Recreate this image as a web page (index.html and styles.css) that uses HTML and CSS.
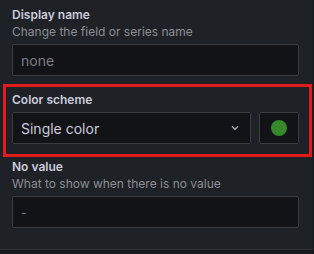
FILE: index.html
```html
<!DOCTYPE html>
<html lang="en">
<head>
    <meta charset="UTF-8">
    <meta name="viewport" content="width=device-width, initial-scale=1.0">
    <title>Field options</title>
    <link rel="stylesheet" href="styles.css">
</head>
<body>
    <div class="options">
        <div class="field">
            <div class="field-label">Display name</div>
            <div class="field-desc">Change the field or series name</div>
            <div class="input"><span class="placeholder">none</span></div>
        </div>

        <div class="field field-scheme">
            <div class="field-label">Color scheme</div>
            <div class="scheme-row">
                <div class="input select">
                    <span class="value">Single color</span>
                    <svg class="chevron" width="10" height="10" viewBox="0 0 10 10">
                        <path d="M2.4 3.8 L5 6.3 L7.6 3.8" fill="none" stroke="#a9aab3" stroke-width="1.3" stroke-linecap="round" stroke-linejoin="round"/>
                    </svg>
                </div>
                <div class="input swatch-btn"><span class="swatch"></span></div>
            </div>
            <!-- highlight frame -->
            <div class="highlight"></div>
        </div>

        <div class="field">
            <div class="field-label">No value</div>
            <div class="field-desc">What to show when there is no value</div>
            <div class="input"><span class="placeholder dash">-</span></div>
        </div>
    </div>
</body>
</html>
```

FILE: styles.css
```css
body{
    margin: 0;
    background-color: #16181c;
    font-family: Inter, "Noto Sans", sans-serif;
    color: #ccccdc;
}
.options{
    width: 313px;
    height: 250px;
    box-sizing: border-box;
    background-color: #1e2126;
    border-bottom: 1px solid #2f3237;
    padding: 7px 14px 0 12px;
}
.field{
    margin-bottom: 16px;
}
.field-scheme{
    position: relative;
    margin-bottom: 15px;
}
.field-label{
    font-size: 12px;
    font-weight: 600;
    line-height: 16px;
    color: #ccccdc;
}
.field-desc{
    font-size: 12px;
    line-height: 18px;
    color: #8d8e95;
    margin-bottom: 3px;
}
.field-scheme .field-label{
    margin-bottom: 4px;
}
.input{
    height: 32px;
    box-sizing: border-box;
    background-color: #121317;
    border: 1px solid #3a3c42;
    border-radius: 2px;
    display: flex;
    align-items: center;
    padding: 0 8px;
    font-size: 14px;
}
.placeholder{
    color: #7c7d85;
}
.dash{
    font-size: 12px;
}
.scheme-row{
    display: flex;
    gap: 8px;
}
.select{
    flex: 1;
    justify-content: space-between;
    padding-right: 10px;
}
.value{
    color: #ccccdc;
}
.swatch-btn{
    width: 40px;
    justify-content: center;
    padding: 0;
}
.swatch{
    width: 16px;
    height: 16px;
    border-radius: 50%;
    background-color: #37872d;
}
.highlight{
    position: absolute;
    left: -9px;
    top: -8px;
    width: 309px;
    height: 73px;
    box-sizing: border-box;
    border: 3px solid #e21b1b;
}
```
